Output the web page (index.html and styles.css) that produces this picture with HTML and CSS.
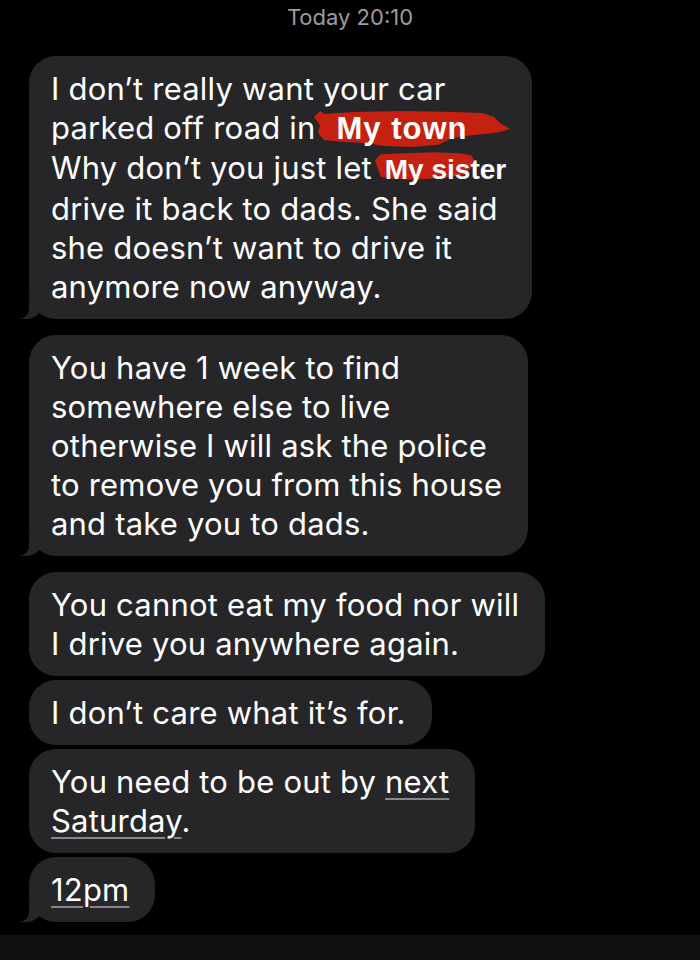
FILE: index.html
```html
<!DOCTYPE html>
<html lang="en">
<head>
    <meta charset="UTF-8">
    <meta name="viewport" content="width=device-width, initial-scale=1.0">
    <title>Messages</title>
    <link rel="stylesheet" href="styles.css">
</head>
<body>
    <header class="stamp">Today 20:10</header>
    <main class="thread">
        <div class="bubble tail">
            I don’t really want your car<br>
            parked off road in <span class="redact redact-town"><svg class="brush brush-town" viewBox="0 0 196 38" aria-hidden="true"><path d="M0 8 L6 2 L10 5 L40 3 L90 2 L140 3 L168 4 L180 8 L186 14 L196 20 L186 23 L172 25 L150 27 L136 30 L124 36 L96 38 L70 37 L52 34 L30 33 L10 31 L4 24 L6 16 Z"/></svg><b class="redact-word">My town</b></span><br>
            Why don’t you just let <span class="redact redact-sister"><svg class="brush brush-sister" viewBox="0 0 102 28" aria-hidden="true"><path d="M0 8 L6 2 L30 1 L60 0 L86 1 L98 3 L102 10 L97 17 L92 23 L70 26 L40 28 L20 27 L6 25 L3 17 Z"/></svg><b class="redact-word">My sister</b></span><br>
            drive it back to dads. She said<br>
            she doesn’t want to drive it<br>
            anymore now anyway.
        </div>
        <div class="bubble tail">
            You have 1 week to find<br>
            somewhere else to live<br>
            otherwise I will ask the police<br>
            to remove you from this house<br>
            and take you to dads.
        </div>
        <div class="bubble">
            You cannot eat my food nor will<br>
            I drive you anywhere again.
        </div>
        <div class="bubble">I don’t care what it’s for.</div>
        <div class="bubble">
            You need to be out by <span class="link">next<br>Saturday</span>.
        </div>
        <div class="bubble tail"><span class="link">12pm</span></div>
    </main>
    <footer class="bottom-bar"></footer>
</body>
</html>
```

FILE: styles.css
```css
body {
    margin: 0;
    background-color: #000;
    color: #fff;
    font-family: Inter, "Liberation Sans", sans-serif;
}
.stamp {
    padding-top: 4px;
    height: 52px;
    text-align: center;
    font-size: 22px;
    line-height: 26px;
    color: #9c9ca1;
}
.thread {
    display: flex;
    flex-direction: column;
    align-items: flex-start;
    gap: 4px;
    padding: 0 0 13px 29px;
}
.bubble {
    position: relative;
    padding: 13px 26px 13px 22px;
    background-color: #262629;
    border-radius: 27px;
    font-size: 31px;
    line-height: 39px;
    letter-spacing: 0.2px;
    white-space: nowrap;
}
.bubble.tail {
    margin-bottom: 12px;
}
.bubble.tail:last-child {
    margin-bottom: 0;
}
.bubble.tail::before {
    content: "";
    position: absolute;
    bottom: 0;
    left: -9px;
    width: 22px;
    height: 22px;
    background-color: #262629;
    border-bottom-right-radius: 16px 14px;
}
.bubble.tail::after {
    content: "";
    position: absolute;
    bottom: 0;
    left: -12px;
    width: 12px;
    height: 22px;
    background-color: #000;
    border-bottom-right-radius: 10px;
}
.redact {
    position: relative;
}
.redact-town {
    margin-left: 12px;
}
.redact-sister {
    margin-left: 4px;
}
.brush {
    position: absolute;
    fill: #c42111;
}
.brush-town {
    left: -22px;
    top: 0;
    width: 196px;
    height: 38px;
}
.brush-sister {
    left: -10px;
    top: 3px;
    width: 100px;
    height: 28px;
}
.redact-word {
    position: relative;
    font-family: "Liberation Sans", Arial, sans-serif;
    font-weight: bold;
    letter-spacing: 0;
}
.redact-town .redact-word {
    font-size: 31px;
    letter-spacing: 1px;
}
.redact-sister .redact-word {
    font-size: 28px;
}
.link {
    text-decoration: underline;
    text-decoration-color: #86868b;
    text-decoration-thickness: 2px;
    text-underline-offset: 5px;
}
.bottom-bar {
    height: 25px;
    background-color: #0f0f10;
}
```
